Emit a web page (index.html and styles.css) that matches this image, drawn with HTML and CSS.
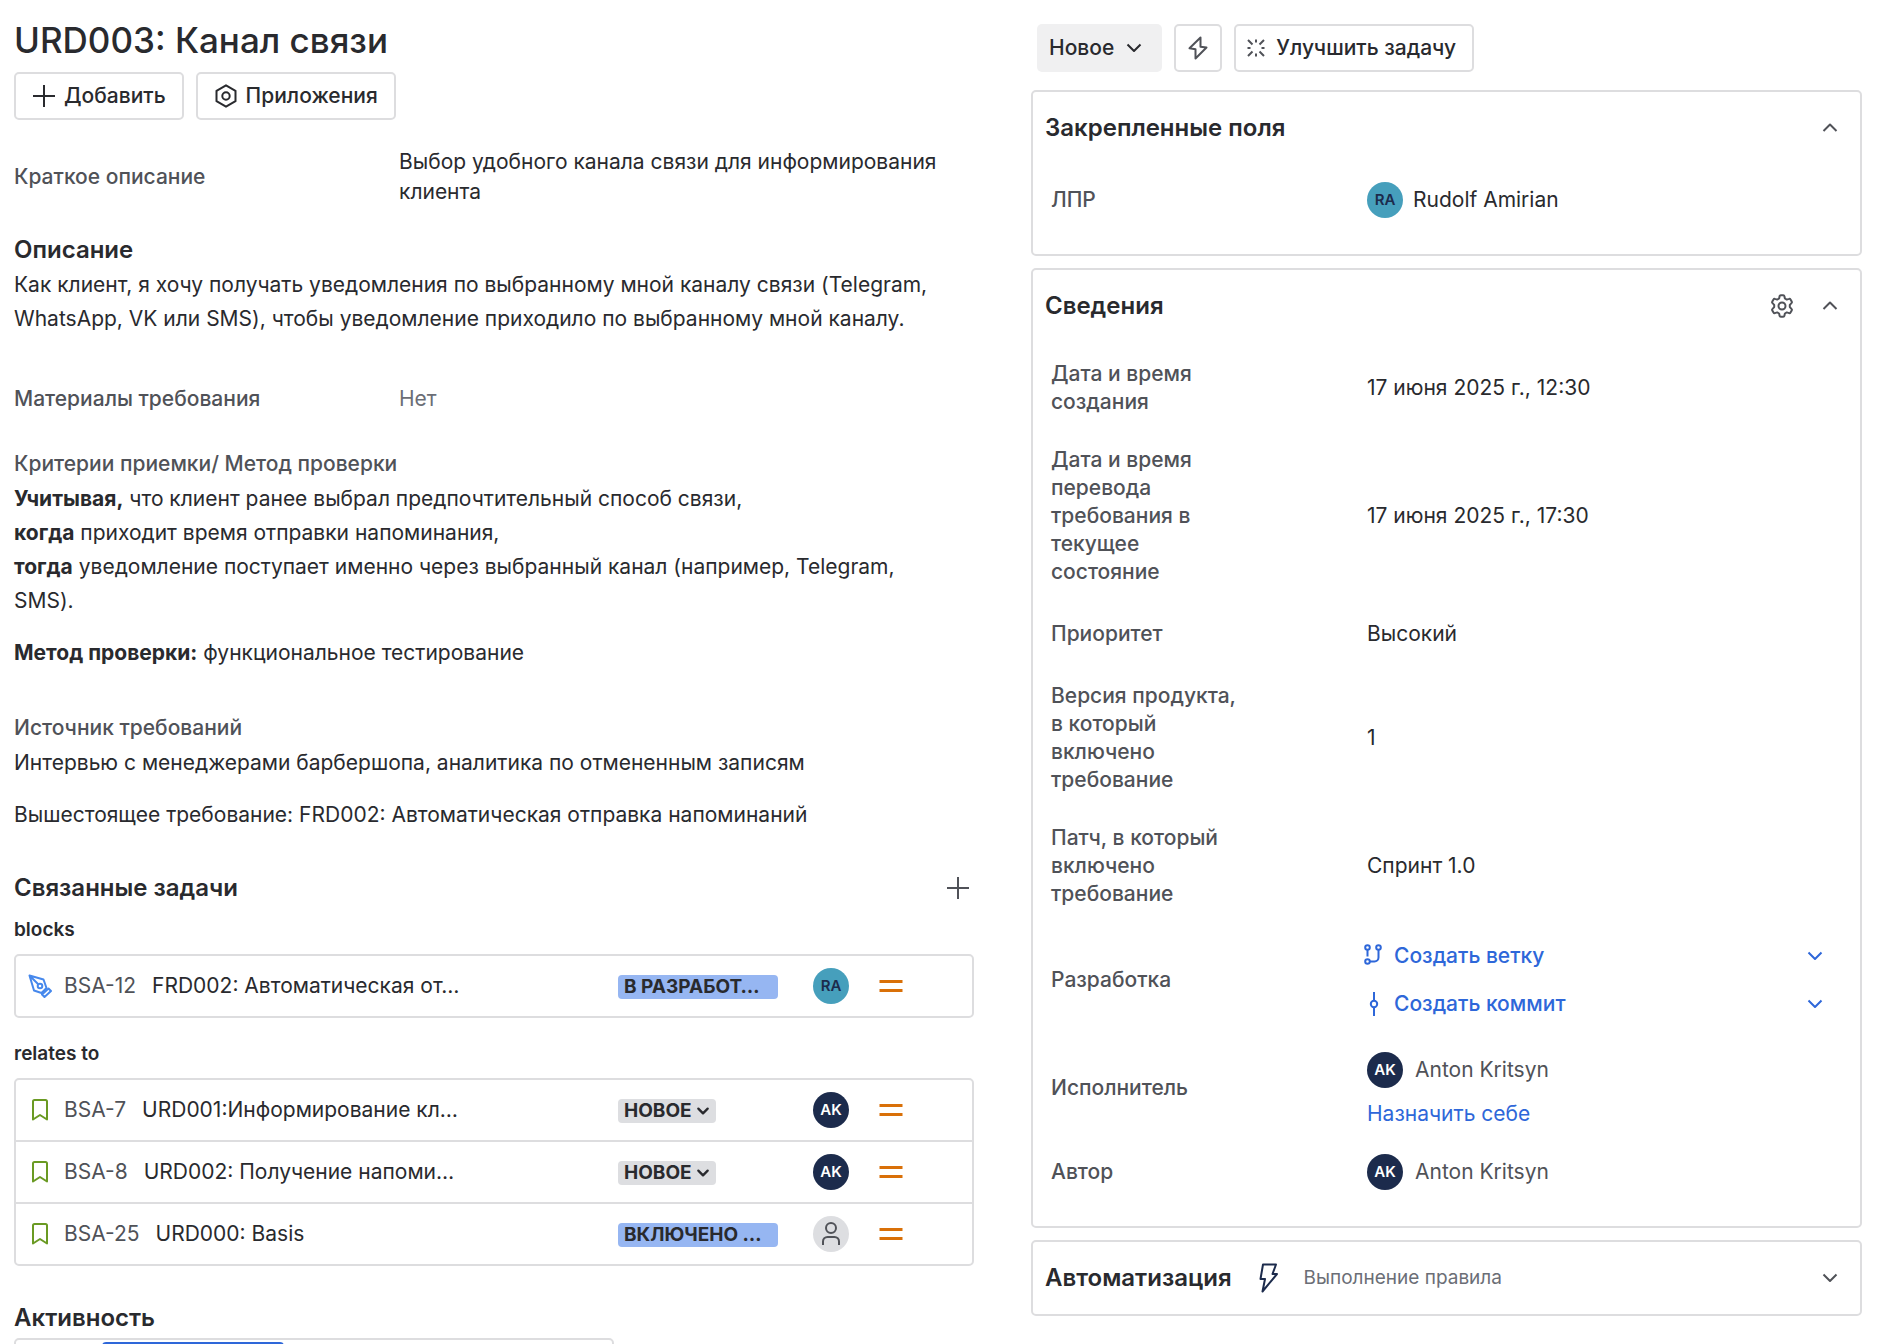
FILE: index.html
```html
<!DOCTYPE html>
<html lang="ru">
<head>
<meta charset="utf-8">
<title>URD003: Канал связи</title>
<link rel="stylesheet" href="styles.css">
</head>
<body>
<svg class="sprite" aria-hidden="true">
  <symbol id="plus" viewBox="0 0 24 24"><path d="M12 1v22M1 12h22"/></symbol>
  <symbol id="down" viewBox="0 0 24 24"><path d="M5.500 8.500 12 15l6.500-6.500"/></symbol>
  <symbol id="up" viewBox="0 0 24 24"><path d="M5.500 15 12 8.500 18.500 15"/></symbol>
  <symbol id="bookmark" viewBox="0 0 24 24"><path d="M5 3.500a1.500 1.500 0 0 1 1.500-1.500h11a1.500 1.500 0 0 1 1.500 1.500v18l-7-4.500-7 4.500z"/></symbol>
  <symbol id="equals" viewBox="0 0 24 24"><path d="M.5 7.500h23M.5 16.500h23"/></symbol>
</svg>
<div class="page">
  <main class="main">
    <h1 class="title">URD003: Канал связи</h1>
    <div class="toolbar">
      <button class="btn btn-wide" type="button"><svg class="icon"><use href="#plus"/></svg>Добавить</button>
      <button class="btn btn-wide" type="button"><svg class="icon" viewBox="0 0 24 24"><path d="M12 1.300 21.500 6.800V17.200L12 22.700 2.500 17.200V6.800z"/><circle cx="12" cy="12" r="3.700"/></svg>Приложения</button>
    </div>
    <div class="field">
      <span class="label">Краткое описание</span>
      <span class="value">Выбор удобного канала связи для информирования клиента</span>
    </div>
    <h2 class="heading">Описание</h2>
    <p class="text">Как клиент, я хочу получать уведомления по выбранному мной каналу связи (Telegram, WhatsApp, VK или SMS), чтобы уведомление приходило по выбранному мной каналу.</p>
    <div class="field field-materials">
      <span class="label">Материалы требования</span>
      <span class="muted">Нет</span>
    </div>
    <h3 class="label block-label">Критерии приемки/ Метод проверки</h3>
    <p class="text"><b>Учитывая,</b> что клиент ранее выбрал предпочтительный способ связи,<br><b>когда</b> приходит время отправки напоминания,<br><b>тогда</b> уведомление поступает именно через выбранный канал (например, Telegram, SMS).</p>
    <p class="text"><b>Метод проверки:</b> функциональное тестирование</p>
    <h3 class="label block-label block-label-far">Источник требований</h3>
    <p class="text">Интервью с менеджерами барбершопа, аналитика по отмененным записям</p>
    <p class="text">Вышестоящее требование: FRD002: Автоматическая отправка напоминаний</p>

    <div class="linked-head">
      <h2 class="heading">Связанные задачи</h2>
      <button class="icon-btn" type="button" aria-label="Добавить связь"><svg class="icon"><use href="#plus"/></svg></button>
    </div>
    <h3 class="relation">blocks</h3>
    <ul class="issues">
      <li class="issue">
        <svg class="icon pen" viewBox="0 0 24 24"><path d="M1.500 1.500 15.500 5.500 18.500 14 13.500 19 6 16.500zM1.500 1.500 10 10"/><circle cx="12" cy="12" r="2.300"/><path d="m20.500 14.500 2.500 2.500-6.500 6-2.500-2.500z"/></svg>
        <a class="key" href="#">BSA-12</a><a class="summary" href="#">FRD002: Автоматическая от…</a>
        <div class="status"><span class="badge badge-blue">В РАЗРАБОТ…</span></div>
        <span class="avatar avatar-ra">RA</span>
        <svg class="icon priority"><use href="#equals"/></svg>
      </li>
    </ul>
    <h3 class="relation">relates to</h3>
    <ul class="issues">
      <li class="issue">
        <svg class="icon story"><use href="#bookmark"/></svg>
        <a class="key" href="#">BSA-7</a><a class="summary" href="#">URD001:Информирование кл…</a>
        <div class="status"><button class="badge" type="button">НОВОЕ<svg class="caret" viewBox="0 0 12 12"><path d="m2 4 4 4 4-4"/></svg></button></div>
        <span class="avatar">AK</span>
        <svg class="icon priority"><use href="#equals"/></svg>
      </li>
      <li class="issue">
        <svg class="icon story"><use href="#bookmark"/></svg>
        <a class="key" href="#">BSA-8</a><a class="summary" href="#">URD002: Получение напоми…</a>
        <div class="status"><button class="badge" type="button">НОВОЕ<svg class="caret" viewBox="0 0 12 12"><path d="m2 4 4 4 4-4"/></svg></button></div>
        <span class="avatar">AK</span>
        <svg class="icon priority"><use href="#equals"/></svg>
      </li>
      <li class="issue">
        <svg class="icon story"><use href="#bookmark"/></svg>
        <a class="key" href="#">BSA-25</a><a class="summary" href="#">URD000: Basis</a>
        <div class="status"><span class="badge badge-blue">ВКЛЮЧЕНО …</span></div>
        <span class="avatar avatar-none"><svg class="icon" viewBox="0 0 24 24"><circle cx="12" cy="6" r="5"/><path d="M4 23v-3.500a4.500 4.500 0 0 1 4.500-4.500h7a4.500 4.500 0 0 1 4.500 4.500V23"/></svg></span>
        <svg class="icon priority"><use href="#equals"/></svg>
      </li>
    </ul>
    <h2 class="heading">Активность</h2>
    <div class="tabs"><span class="tab-active"></span></div>
  </main>

  <aside class="side">
    <div class="actions">
      <button class="btn btn-status" type="button">Новое<svg class="icon"><use href="#down"/></svg></button>
      <button class="btn btn-square" type="button" aria-label="Автоматизация"><svg class="icon" viewBox="0 0 24 24"><path d="M14.500 1.500 3.500 12.200l6 1V22.500L20.500 11.500l-6-.8z"/></svg></button>
      <button class="btn btn-improve" type="button"><svg class="icon rays" viewBox="0 0 24 24"><path d="M12 3.500v3M12 17.500v3M3.500 12h3M17.500 12h3M4 4l4.500 4.500M20 4l-4.500 4.500M4 20l4.500-4.500M20 20l-4.500-4.500"/></svg>Улучшить задачу</button>
    </div>

    <section class="card">
      <div class="card-head">
        <h2 class="heading card-title">Закрепленные поля</h2>
        <button class="icon-btn" type="button" aria-label="Свернуть"><svg class="icon"><use href="#up"/></svg></button>
      </div>
      <dl class="details">
        <div class="row"><dt class="label">ЛПР</dt><dd class="person"><span class="avatar avatar-ra">RA</span>Rudolf Amirian</dd></div>
      </dl>
    </section>

    <section class="card">
      <div class="card-head">
        <h2 class="heading card-title">Сведения</h2>
        <button class="icon-btn" type="button" aria-label="Настроить"><svg class="icon" viewBox="0 0 24 24"><circle cx="12" cy="12" r="3.500"/><path d="M10.800 1.200h2.400q1 0 1.200 1l.5 2.300 1.900 1.100 2.300-.7q.9-.3 1.400.6l1.200 2.100q.5.900-.2 1.500L19.800 10.900v2.200l1.700 1.800q.7.700.2 1.500l-1.200 2.100q-.5.900-1.400.6l-2.300-.7-1.900 1.100-.5 2.300q-.2 1-1.200 1h-2.400q-1 0-1.200-1l-.5-2.300-1.900-1.100-2.300.7q-.9.300-1.400-.6L2.300 16.400q-.5-.9.200-1.500l1.700-1.800v-2.200L2.500 9.100q-.7-.7-.2-1.500l1.200-2.100q.5-.9 1.400-.6l2.300.7 1.900-1.100.5-2.300q.2-1 1.200-1z"/></svg></button>
        <button class="icon-btn" type="button" aria-label="Свернуть"><svg class="icon"><use href="#up"/></svg></button>
      </div>
      <dl class="details">
        <div class="row"><dt class="label">Дата и время создания</dt><dd>17 июня 2025 г., 12:30</dd></div>
        <div class="row"><dt class="label">Дата и время перевода требования в текущее состояние</dt><dd>17 июня 2025 г., 17:30</dd></div>
        <div class="row"><dt class="label">Приоритет</dt><dd>Высокий</dd></div>
        <div class="row"><dt class="label">Версия продукта, в который включено требование</dt><dd>1</dd></div>
        <div class="row"><dt class="label">Патч, в который включено требование</dt><dd>Спринт 1.0</dd></div>
        <div class="row"><dt class="label">Разработка</dt>
          <dd class="dev">
            <div class="dev-row"><a class="dev-link" href="#"><svg class="icon" viewBox="0 0 24 24"><circle cx="5.500" cy="3.500" r="2.300"/><circle cx="16.500" cy="3.500" r="2.300"/><circle cx="5.500" cy="17.500" r="2.300"/><path d="M5.500 6v6.500M16.500 6v7.500a4 4 0 0 1-4 4H8"/></svg>Создать ветку</a><button class="icon-btn" type="button" aria-label="Варианты ветки"><svg class="icon"><use href="#down"/></svg></button></div>
            <div class="dev-row"><a class="dev-link" href="#"><svg class="icon" viewBox="0 0 24 24"><circle cx="12" cy="12" r="3.200"/><path d="M12 0v8.500M12 15.500V24"/></svg>Создать коммит</a><button class="icon-btn" type="button" aria-label="Варианты коммита"><svg class="icon"><use href="#down"/></svg></button></div>
          </dd></div>
        <div class="row"><dt class="label">Исполнитель</dt><dd class="assignee"><span class="person person-soft"><span class="avatar">AK</span>Anton Kritsyn</span><a class="assign" href="#">Назначить себе</a></dd></div>
        <div class="row"><dt class="label">Автор</dt><dd class="person person-soft"><span class="avatar">AK</span>Anton Kritsyn</dd></div>
      </dl>
    </section>

    <section class="card card-head card-automation">
      <h2 class="heading">Автоматизация</h2>
      <svg class="bolt" viewBox="0 0 24 32"><path d="M7 2.500h13l-3.500 9.500h4.500L6.500 29.500 9 17H4.500z"/></svg>
      <span class="hint">Выполнение правила</span>
      <button class="icon-btn" type="button" aria-label="Развернуть"><svg class="icon"><use href="#down"/></svg></button>
    </section>
  </aside>
</div>
</body>
</html>
```
FILE: styles.css
```css
* { box-sizing: border-box; }

body {
  margin: 0;
  background: #fff;
  color: #292a2e;
  font-family: Inter, "Liberation Sans", sans-serif;
  font-size: 21px;
  line-height: 30px;
}

h1, h2, h3, p, ul, dl, dd { margin: 0; padding: 0; }
ul { list-style: none; }
a { color: inherit; text-decoration: none; }
button { font: inherit; color: inherit; cursor: pointer; }

.sprite { position: absolute; width: 0; height: 0; }

.icon {
  flex: none;
  width: 24px;
  height: 24px;
  fill: none;
  stroke: currentColor;
  stroke-width: 2;
  stroke-linejoin: round;
}

.page {
  display: grid;
  grid-template-columns: 960fr 831fr;
  column-gap: 57px;
  align-items: start;
  height: 100vh;
  overflow: hidden;
  padding: 0 28px 0 14px;
}

.main { padding-top: 16px; }

.title { font-size: 35px; line-height: 48px; font-weight: 500; }

.toolbar, .actions { display: flex; gap: 12px; }
.toolbar { margin-top: 8px; }

.btn {
  display: flex;
  align-items: center;
  gap: 8px;
  height: 48px;
  border: 2px solid #dddddf;
  border-radius: 5px;
  background: #fff;
  font-weight: 500;
  white-space: nowrap;
}
.btn-wide { padding: 0 16px; }

.field {
  display: grid;
  grid-template-columns: 385fr 575fr;
  align-items: center;
  margin: 27px 0 29px;
}
.label { color: #505258; font-size: 21px; font-weight: 500; }
.muted { color: #6b6e76; }

.heading { font-size: 24px; line-height: 28px; font-weight: 600; }
.text { line-height: 34px; padding-right: 30px; margin-top: 18px; }
.heading + .text, .block-label + .text { margin-top: 4px; }

.field-materials { margin: 48px 0 36px; }
.block-label { line-height: 28px; }
.block-label-far { margin-top: 44px; }

.linked-head {
  display: flex;
  justify-content: space-between;
  align-items: center;
  margin-top: 42px;
  padding-right: 4px;
}

.icon-btn {
  display: flex;
  padding: 0;
  border: 0;
  background: none;
  color: #505258;
}

.relation { margin: 16px 0 12px; font-size: 19px; line-height: 24px; font-weight: 600; }

.issues { border: 2px solid #dddddf; border-radius: 5px; margin-bottom: 24px; }
.issue {
  display: flex;
  align-items: center;
  height: 60px;
  padding: 0 69px 0 12px;
}
.issue + .issue { border-top: 2px solid #dddddf; height: 62px; }
.pen { color: #4688ec; }
.story { color: #6a9a23; }
.key { margin: 0 16px 0 12px; color: #505258; }
.summary { flex: 1; white-space: nowrap; }
.status { width: 195px; }
.priority { color: #d97008; margin-left: 30px; stroke-width: 3; }

.badge {
  display: inline-flex;
  align-items: center;
  gap: 4px;
  height: 24px;
  padding: 0 6px;
  border: 0;
  border-radius: 4px;
  background: #dddee1;
  font-size: 19px;
  line-height: 24px;
  font-weight: 700;
  vertical-align: middle;
}
.badge-blue { background: #96b6f2; min-width: 160px; }
.caret { width: 14px; height: 14px; fill: none; stroke: currentColor; stroke-width: 2; stroke-linecap: round; stroke-linejoin: round; }

.avatar {
  display: flex;
  flex: none;
  align-items: center;
  justify-content: center;
  width: 36px;
  height: 36px;
  border-radius: 50%;
  background: #1c2b4c;
  color: #fff;
  font-size: 15px;
  font-weight: 600;
}
.avatar-ra { background: #469fbc; color: #1c2b4c; }
.avatar-none { background: #dddee1; color: #505258; }

.issues + .heading { margin-top: 38px; }
.tabs {
  display: flex;
  width: 600px;
  height: 48px;
  margin-top: 6px;
  padding: 2px 86px;
  border: 2px solid #dddddf;
  border-radius: 5px;
}
.tab-active { width: 182px; border: 2px solid #2e67d9; border-radius: 4px; }

.side { padding-top: 24px; }
.actions { padding-left: 6px; margin-bottom: 18px; }
.btn-status { border: 0; background: #f0f0f1; padding: 0 16px 0 12px; }
.btn-square { width: 48px; justify-content: center; padding: 0; color: #505258; }
.btn-improve { padding: 0 16px 0 8px; }
.rays { color: #505258; }

.card { margin-bottom: 12px; border: 2px solid #dddddf; border-radius: 5px; }
.card-head { display: flex; align-items: center; gap: 24px; padding: 22px 18px 0 12px; }
.card-title { flex: 1; }

.details { display: flex; flex-direction: column; gap: 30px; padding: 40px 18px 36px; }
.row { display: grid; grid-template-columns: 316fr 475fr; align-items: center; min-height: 36px; }
.row .label { width: 200px; line-height: 28px; }

.person { display: flex; align-items: center; gap: 10px; }
.person-soft { gap: 12px; color: #505258; }
.dev { display: flex; flex-direction: column; gap: 12px; margin-left: -5px; }
.dev-row { display: flex; align-items: center; justify-content: space-between; height: 36px; padding-right: 15px; }
.dev-row, .dev-row .icon-btn, .assign { color: #2e67d9; }
.dev-link { display: flex; align-items: center; gap: 8px; font-weight: 500; }
.assignee { display: flex; flex-direction: column; align-items: flex-start; gap: 16px; }
.assign { line-height: 20px; }

.card-automation { height: 76px; padding-top: 0; }
.bolt { width: 24px; height: 32px; fill: none; stroke: #1c2b4c; stroke-width: 2; stroke-linejoin: round; }
.hint { flex: 1; font-size: 19px; color: #6b6e76; }
```
